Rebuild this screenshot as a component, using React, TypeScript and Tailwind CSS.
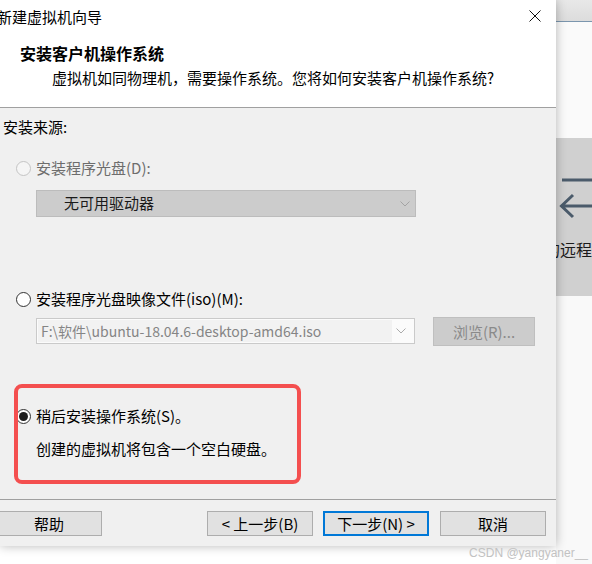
import React from 'react';

function Chevron({ color }: { color: string }) {
  return (
    <svg width="10" height="6" viewBox="0 0 10 6" className="shrink-0">
      <polyline points="0.5,0.5 5,5 9.5,0.5" fill="none" stroke={color} strokeWidth="1" />
    </svg>
  );
}

function Radio({ kind }: { kind: 'disabled' | 'off' | 'on' }) {
  const ring = kind === 'disabled' ? 'border-[#c4c4c4] bg-[#f5f5f5]' : 'border-[#333333] bg-white';
  return (
    <div className={`w-[15px] h-[15px] rounded-full border flex items-center justify-center shrink-0 ${ring}`}>
      {kind === 'on' && <div className="w-[9px] h-[9px] rounded-full bg-[#1e1e1e]" />}
    </div>
  );
}

function Btn({ children, primary, extra }: { children: React.ReactNode; primary?: boolean; extra?: string }) {
  const b = primary ? 'border-2 border-[#0078d7]' : 'border border-[#adadad]';
  return (
    <div className={`w-[106px] h-[25px] bg-[#e1e1e1] flex items-center justify-center leading-[20px] ${b} ${extra ?? ''}`}>
      {children}
    </div>
  );
}

export default function App() {
  return (
    <div className="relative w-[592px] h-[564px] overflow-hidden bg-white flex font-['Noto_Sans_CJK_SC',sans-serif] text-[15px] text-black">
      {/* dialog */}
      <div className="relative z-10 w-[556px] h-[546px] shrink-0 flex flex-col bg-[#f0f0f0] shadow-[0_0_10px_rgba(0,0,0,0.28)]">
        <div className="bg-white h-[107px] flex flex-col">
          <div className="h-[34px] flex items-center justify-between">
            <span className="ml-[-3px] leading-[20px]">新建虚拟机向导</span>
            <svg className="mr-[15px] mt-[-2px]" width="12" height="12" viewBox="0 0 12 12">
              <path d="M0.5 0.5 L11.5 11.5 M11.5 0.5 L0.5 11.5" stroke="#111" strokeWidth="1" fill="none" />
            </svg>
          </div>
          <div className="pl-[20px] pt-[9px] font-bold text-[16px] leading-[20px]">安装客户机操作系统</div>
          <div className="pl-[52px] mt-[5px] leading-[20px]">虚拟机如同物理机，需要操作系统。您将如何安装客户机操作系统?</div>
        </div>
        <div className="h-px bg-[#a0a0a0]" />

        {/* body */}
        <div className="relative h-[391px] flex flex-col">
          <div className="pl-[3px] mt-[9px] leading-[20px]">安装来源:</div>

          <div className="mt-[21px] pl-[16px] flex items-center h-[20px]">
            <Radio kind="disabled" />
            <span className="ml-[5px] leading-[20px] text-[#6d6d6d]">安装程序光盘(D):</span>
          </div>

          <div className="ml-[36px] mt-[12px] w-[380px] h-[27px] bg-[#cccccc] border border-[#bcbcbc] flex items-center justify-between pl-[27px] pr-[5px]">
            <span className="leading-[20px] text-[#1a1a1a] mt-[-2px]">无可用驱动器</span>
            <Chevron color="#a3a3a3" />
          </div>

          <div className="mt-[72px] pl-[16px] flex items-center h-[20px]">
            <Radio kind="off" />
            <span className="ml-[5px] leading-[20px]">安装程序光盘映像文件(iso)(M):</span>
          </div>

          <div className="mt-[8px] flex items-start">
            <div className="ml-[36px] mt-[1px] w-[379px] h-[26px] bg-[#fbfbfb] border border-[#cacaca] flex items-center justify-between pl-[1px] pr-[8px]">
              <div className="w-[354px] h-[22px] bg-[#f2f2f2] flex items-center pl-[3px]">
                <span className="text-[14px] leading-[20px] text-[#858585] whitespace-nowrap">F:\软件\ubuntu-18.04.6-desktop-amd64.iso</span>
              </div>
              <Chevron color="#ababab" />
            </div>
            <div className="ml-[18px] w-[102px] h-[29px] bg-[#cccccc] border border-[#bfbfbf] flex items-center justify-center">
              <span className="leading-[20px] text-[#8a8a8a]">浏览(R)...</span>
            </div>
          </div>

          <div className="mt-[60px] pl-[16px] flex items-center h-[20px]">
            <Radio kind="on" />
            <span className="ml-[5px] leading-[20px]">稍后安装操作系统(S)。</span>
          </div>
          <div className="mt-[13px] pl-[36px] leading-[20px]">创建的虚拟机将包含一个空白硬盘。</div>

          {/* annotation box */}
          <div className="absolute left-[14px] top-[276px] w-[287px] h-[100px] border-4 border-[#f44f4f] rounded-[8px]" />
        </div>

        <div className="h-px bg-[#a0a0a0]" />

        {/* footer */}
        <div className="flex-1 flex items-start pt-[11px]">
          <Btn extra="ml-[-4px]">帮助</Btn>
          <Btn extra="ml-[105px]">&lt; 上一步(B)</Btn>
          <Btn primary extra="ml-[10px]">下一步(N) &gt;</Btn>
          <Btn extra="ml-[11px]">取消</Btn>
        </div>
      </div>

      {/* right strip of the window behind */}
      <div className="w-[36px] h-[564px] shrink-0 flex flex-col">
        <div className="h-[21px] bg-gradient-to-b from-[#e8e8e8] to-[#dcdcdc]" />
        <div className="h-px bg-[#7b96ae]" />
        <div className="h-[116px] bg-[#fafafa]" />
        <div className="h-[158px] bg-[#d0d0d0] flex flex-col overflow-hidden">
          <svg className="mt-[34px] shrink-0" width="36" height="50" viewBox="0 0 36 50">
            <path d="M6 8 H36" stroke="#4b5b6b" strokeWidth="3" fill="none" />
            <path d="M5.5 34 H36 M17 23 L5.5 34 L17 45" stroke="#4b5b6b" strokeWidth="3" fill="none" strokeLinejoin="miter" />
          </svg>
          <div className="mt-[17px] ml-[-12px] whitespace-nowrap text-[16px] leading-[20px] text-[#1a1a1a]">的远程</div>
        </div>
        <div className="flex-1 bg-[#f9f9f9]" />
      </div>

      <div className="absolute right-[4px] bottom-[4px] z-20 font-['Liberation_Sans',sans-serif] text-[12px] leading-[14px] text-[#c2c2c2]">
        CSDN @yangyaner__
      </div>
    </div>
  );
}
